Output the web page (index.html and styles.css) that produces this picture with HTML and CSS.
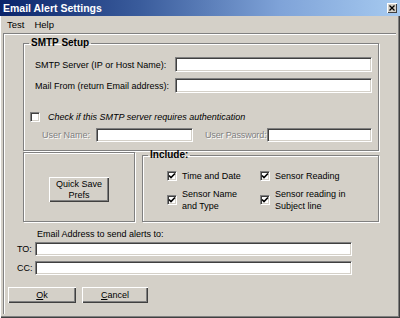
FILE: index.html
```html
<!DOCTYPE html>
<html>
<head>
	<meta charset="utf-8">
	<title>Email Alert Settings</title>
	<link rel="stylesheet" href="styles.css">
</head>
<body>
	<div class="window">
		<div class="titlebar">
			<span class="title">Email Alert Settings</span>
			<span class="closeBtn">
				<svg width="6" height="6" viewBox="0 0 6 6"><path d="M0.5 0.5 L5.5 5.5 M5.5 0.5 L0.5 5.5" stroke="#000" stroke-width="1.3"/></svg>
			</span>
		</div>
		<div class="frame">
			<div class="menubar">
				<span class="menuItem">Test</span>
				<span class="menuItem">Help</span>
			</div>
			<div class="client">
				<fieldset class="group smtp">
					<legend>SMTP Setup</legend>
					<div class="row rowServer">
						<span class="rowLabel">SMTP Server (IP or Host Name):</span>
						<span class="field wideField"></span>
					</div>
					<div class="row rowFrom">
						<span class="rowLabel">Mail From (return Email address):</span>
						<span class="field wideField"></span>
					</div>
					<div class="row rowAuth">
						<span class="check"></span>
						<span class="authText">Check if this SMTP server requires authentication</span>
					</div>
					<div class="row rowUser">
						<span class="disabled userLabel">User Name:</span>
						<span class="field userField"></span>
						<span class="disabled passLabel">User Password:</span>
						<span class="field passField"></span>
					</div>
				</fieldset>

				<div class="lower">
					<div class="group quickBox">
						<button class="winButton quickButton">Quick Save<br>Prefs</button>
					</div>
					<fieldset class="group include">
						<legend>Include:</legend>
						<div class="includeGrid">
							<div class="option">
								<span class="check"><svg width="8" height="8" viewBox="0 0 8 8"><path d="M1 3.5 L3 5.5 L7 1.5" fill="none" stroke="#000" stroke-width="1.6"/></svg></span>
								<span>Time and Date</span>
							</div>
							<div class="option">
								<span class="check"><svg width="8" height="8" viewBox="0 0 8 8"><path d="M1 3.5 L3 5.5 L7 1.5" fill="none" stroke="#000" stroke-width="1.6"/></svg></span>
								<span>Sensor Reading</span>
							</div>
							<div class="option">
								<span class="check"><svg width="8" height="8" viewBox="0 0 8 8"><path d="M1 3.5 L3 5.5 L7 1.5" fill="none" stroke="#000" stroke-width="1.6"/></svg></span>
								<span>Sensor Name<br>and Type</span>
							</div>
							<div class="option">
								<span class="check"><svg width="8" height="8" viewBox="0 0 8 8"><path d="M1 3.5 L3 5.5 L7 1.5" fill="none" stroke="#000" stroke-width="1.6"/></svg></span>
								<span>Sensor reading in<br>Subject line</span>
							</div>
						</div>
					</fieldset>
				</div>

				<div class="emailLabel">Email Address to send alerts to:</div>
				<div class="row addrRow">
					<span class="addrLabel">TO:</span>
					<span class="field addrField"></span>
				</div>
				<div class="row addrRow ccRow">
					<span class="addrLabel">CC:</span>
					<span class="field addrField"></span>
				</div>

				<div class="buttonRow">
					<button class="winButton okButton"><u>O</u>k</button>
					<button class="winButton cancelButton"><u>C</u>ancel</button>
				</div>
			</div>
		</div>
	</div>
</body>
</html>
```

FILE: styles.css
```css
html, body {
	margin: 0;
	padding: 0;
	background-color: #D4D0C8;
}

body {
	font-family: "Liberation Sans", Arial, sans-serif;
	font-size: 9px;
	line-height: 12px;
	color: #000;
	white-space: nowrap;
}

.window {
	width: 400px;
	height: 318px;
	display: flex;
	flex-direction: column;
	background-color: #D4D0C8;
	overflow: hidden;
}

/* title bar */
.titlebar {
	height: 16px;
	flex-shrink: 0;
	display: flex;
	align-items: center;
	justify-content: space-between;
	padding: 0 3px 0 3px;
	background: linear-gradient(to right, #0A246A 0%, #3A5C9C 35%, #7FA3D8 70%, #A6CAF0 100%);
}

.title {
	font-weight: bold;
	font-size: 10.5px;
	color: white;
}

.closeBtn {
	width: 10px;
	height: 10px;
	display: flex;
	align-items: center;
	justify-content: center;
	background-color: #D4D0C8;
	box-shadow: inset 1px 1px #fff, inset -1px -1px #404040;
}

/* window frame below the title */
.frame {
	flex: 1;
	display: flex;
	flex-direction: column;
	padding: 0 4px 4px 3px;
	box-shadow: inset 1px 0 #fff, inset -1px -1px #404040, inset -2px -2px #808080;
}

.menubar {
	height: 17px;
	flex-shrink: 0;
	display: flex;
	align-items: center;
	padding-left: 4px;
	font-size: 9.5px;
}

.menuItem {
	margin-right: 10px;
}

.client {
	flex: 1;
	border-top: 1px solid #808080;
	border-left: 1px solid #808080;
	box-shadow: inset 1px 1px #fff;
	padding: 1px 0 0 1px;
}

/* etched group boxes */
.group {
	border: 1px solid #808080;
	box-shadow: inset 1px 1px #fff, 1px 1px #fff;
	margin: 0;
	padding: 0;
	box-sizing: border-box;
	min-width: 0;
}

.group legend {
	font-weight: bold;
	font-size: 10px;
	line-height: 12px;
	padding: 0 2px;
	margin-left: 5px;
}

.smtp {
	width: 356px;
	margin: 2px 0 0 18px;
	padding: 8px 0 8px 0;
}

.row {
	display: flex;
	align-items: center;
}

.rowLabel {
	width: 140px;
	padding-left: 11px;
}

.field {
	display: block;
	box-sizing: border-box;
	flex-shrink: 0;
	background-color: white;
	border-top: 1px solid #808080;
	border-left: 1px solid #808080;
	border-bottom: 1px solid #fff;
	border-right: 1px solid #fff;
	box-shadow: inset 1px 1px #404040, inset -1px -1px #D4D0C8;
}

.wideField {
	width: 197px;
	height: 15px;
}

.rowFrom {
	margin-top: 6px;
}

.rowAuth {
	margin-top: 18px;
	height: 12px;
}

.check {
	width: 10px;
	height: 10px;
	box-sizing: border-box;
	flex-shrink: 0;
	display: flex;
	align-items: center;
	justify-content: center;
	background-color: white;
	border-top: 1px solid #808080;
	border-left: 1px solid #808080;
	border-bottom: 1px solid #fff;
	border-right: 1px solid #fff;
	box-shadow: inset 1px 1px #404040, inset -1px -1px #D4D0C8;
}

.rowAuth .check {
	margin-left: 6px;
}

.authText {
	font-style: italic;
	margin-left: 8px;
}

.rowUser {
	margin-top: 5px;
}

.disabled {
	color: #808080;
	text-shadow: 1px 1px #fff;
}

.userLabel {
	margin-left: 18px;
	width: 54px;
}

.userField {
	width: 97px;
	height: 14px;
}

.passLabel {
	margin-left: 12px;
	width: 62px;
	letter-spacing: -0.15px;
}

.passField {
	width: 105px;
	height: 14px;
}

/* lower boxes */
.lower {
	display: flex;
	align-items: flex-start;
	margin: -2px 0 0 18px;
}

.quickBox {
	width: 112px;
	height: 70px;
	margin-top: 3px;
	display: flex;
	align-items: center;
	justify-content: center;
	padding-top: 5px;
}

.winButton {
	font-family: inherit;
	font-size: inherit;
	line-height: 12px;
	color: #000;
	background-color: #D4D0C8;
	border: none;
	padding: 0;
	box-shadow: inset 1px 1px #fff, inset -1px -1px #404040, inset -2px -2px #808080;
}

.quickButton {
	width: 60px;
	height: 25px;
	line-height: 11px;
}

.include {
	width: 237px;
	height: 73px;
	margin-left: 7px;
}

.includeGrid {
	display: grid;
	grid-template-columns: 93px 1fr;
	row-gap: 6px;
	margin: 9px 0 0 24px;
}

.option {
	display: flex;
	align-items: center;
}

.option .check {
	margin-right: 5px;
}

/* address part */
.emailLabel {
	margin: 6px 0 0 32px;
}

.addrRow {
	margin-top: 2px;
}

.ccRow {
	margin-top: 5px;
}

.addrLabel {
	width: 18px;
	padding-left: 12px;
}

.addrField {
	width: 317px;
	height: 14px;
}

.buttonRow {
	display: flex;
	margin: 12px 0 0 3px;
}

.okButton {
	width: 68px;
	height: 16px;
}

.cancelButton {
	width: 66px;
	height: 16px;
	margin-left: 6px;
}
```
